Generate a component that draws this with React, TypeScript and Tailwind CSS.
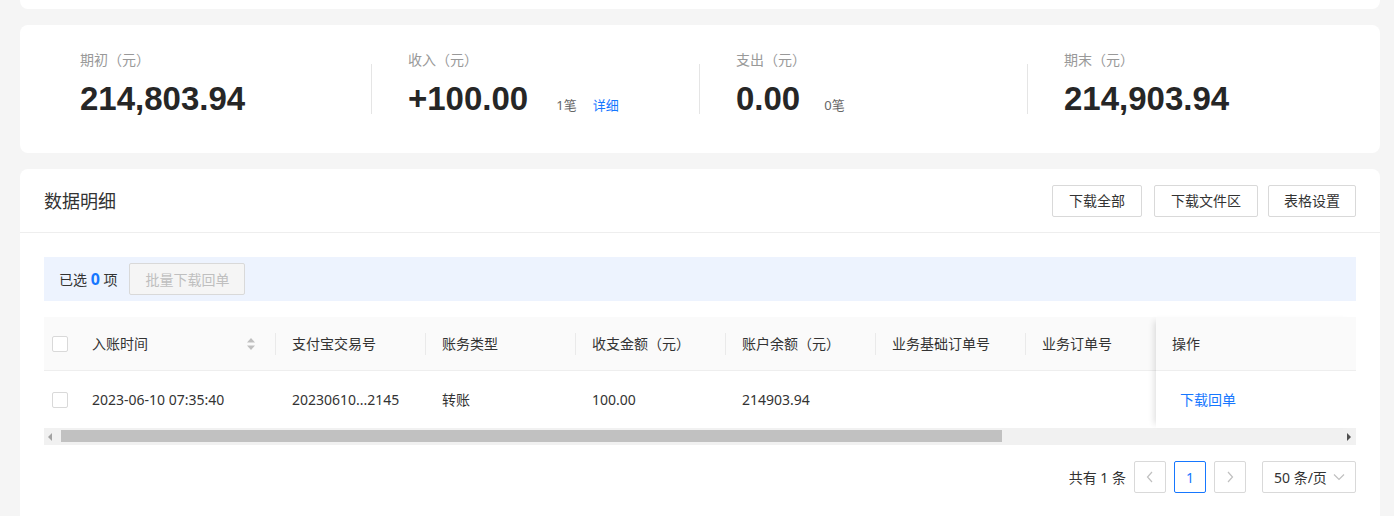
import React from "react";

const font = { fontFamily: '"Noto Sans", "Noto Sans CJK SC", sans-serif' };

function Stat({ label, value, extra, first }: { label: string; value: string; extra?: React.ReactNode; first?: boolean }) {
  return (
    <div className="w-[328px] flex items-start">
      <div className={`mt-[14px] h-[50px] w-px shrink-0 ${first ? "bg-transparent" : "bg-[#e5e5e5]"}`} />
      <div className="pl-[36px] flex flex-col">
        <div className="text-[14px] text-[#999] leading-[20px]">{label}</div>
        <div className="flex items-end mt-[11px]">
          <span className="text-[33px] font-bold text-[#262626] leading-[36px]" style={{ fontFamily: '"Liberation Sans", sans-serif' }}>{value}</span>
          {extra}
        </div>
      </div>
    </div>
  );
}

function Checkbox() {
  return <div className="w-[16px] h-[16px] border border-[#d9d9d9] rounded-[2px] bg-white" />;
}

function HeadCell({ w, children, divider = true, sort }: { w: number; children: React.ReactNode; divider?: boolean; sort?: boolean }) {
  return (
    <div className="relative flex items-center shrink-0 pl-[16px] pr-[16px] h-full" style={{ width: w }}>
      <span className="text-[14px] text-[#333] flex-1">{children}</span>
      {sort && (
        <svg width="10" height="14" viewBox="0 0 10 14" className="mr-[4px]">
          <path d="M5 1 L9 5.5 L1 5.5 Z" fill="#bfbfbf" />
          <path d="M5 13 L9 8.5 L1 8.5 Z" fill="#bfbfbf" />
        </svg>
      )}
      {divider && <div className="absolute right-0 top-1/2 -translate-y-1/2 w-px h-[22px] bg-[#eaeaea]" />}
    </div>
  );
}

function Cell({ w, children }: { w: number; children?: React.ReactNode }) {
  return (
    <div className="flex items-center shrink-0 pl-[16px] h-full text-[14px] text-[#333]" style={{ width: w }}>
      {children}
    </div>
  );
}

export default function App() {
  return (
    <div className="w-[1394px] h-[516px] bg-[#f5f5f5] overflow-hidden" style={font}>
      <div className="ml-[20px] mr-[14px] h-[9px] bg-white rounded-b-[8px]" />
      <div className="ml-[20px] mr-[14px] mt-[16px] h-[128px] bg-white rounded-[8px] flex items-start pl-[23px] pt-[25px]">
        <Stat first label="期初（元）" value="214,803.94" />
        <Stat
          label="收入（元）"
          value="+100.00"
          extra={
            <span className="ml-[28px] mb-[2px] text-[13px] text-[#666] leading-[20px]">
              1笔<span className="ml-[16px] text-[#1677ff]">详细</span>
            </span>
          }
        />
        <Stat
          label="支出（元）"
          value="0.00"
          extra={<span className="ml-[24px] mb-[2px] text-[13px] text-[#666] leading-[20px]">0笔</span>}
        />
        <Stat label="期末（元）" value="214,903.94" />
      </div>

      <div className="ml-[20px] mr-[14px] mt-[16px] bg-white rounded-t-[8px] h-[400px]">
        <div className="h-[64px] border-b border-[#eeeeee] flex items-center justify-between px-[24px]">
          <div className="text-[18px] text-[#333] mt-[2px]">数据明细</div>
          <div className="flex">
            <button className="h-[32px] w-[90px] border border-[#d9d9d9] rounded-[2px] text-[14px] text-[#333] bg-white">下载全部</button>
            <button className="ml-[12px] h-[32px] w-[104px] border border-[#d9d9d9] rounded-[2px] text-[14px] text-[#333] bg-white">下载文件区</button>
            <button className="ml-[10px] h-[32px] w-[88px] border border-[#d9d9d9] rounded-[2px] text-[14px] text-[#333] bg-white">表格设置</button>
          </div>
        </div>

        <div className="px-[24px] pt-[24px]">
          <div className="h-[44px] bg-[#edf3fe] flex items-center pl-[15px]">
            <span className="text-[14px] text-[#333]">
              已选 <span className="text-[#1677ff] font-bold text-[16px]">0</span> 项
            </span>
            <button className="ml-[12px] h-[32px] w-[116px] border border-[#d9d9d9] rounded-[2px] bg-[#f5f5f5] text-[14px] text-[#bfbfbf]">批量下载回单</button>
          </div>

          <div className="mt-[16px] relative">
            <div className="flex">
              <div className="w-[1112px] overflow-hidden">
                <div className="w-[1140px]">
                  <div className="h-[54px] bg-[#fafafa] border-b border-[#eeeeee] flex items-center">
                    <div className="w-[32px] shrink-0 flex justify-center"><Checkbox /></div>
                    <HeadCell w={200} sort>入账时间</HeadCell>
                    <HeadCell w={150}>支付宝交易号</HeadCell>
                    <HeadCell w={150}>账务类型</HeadCell>
                    <HeadCell w={150}>收支金额（元）</HeadCell>
                    <HeadCell w={150}>账户余额（元）</HeadCell>
                    <HeadCell w={150}>业务基础订单号</HeadCell>
                    <HeadCell w={150} divider={false}>业务订单号</HeadCell>
                  </div>
                  <div className="h-[57px] flex items-center">
                    <div className="w-[32px] shrink-0 flex justify-center"><Checkbox /></div>
                    <Cell w={200}>2023-06-10 07:35:40</Cell>
                    <Cell w={150}>20230610...2145</Cell>
                    <Cell w={150}>转账</Cell>
                    <Cell w={150}>100.00</Cell>
                    <Cell w={150}>214903.94</Cell>
                    <Cell w={150} />
                    <Cell w={150} />
                  </div>
                </div>
              </div>
              <div className="w-[200px] shrink-0 shadow-[-6px_0_6px_-4px_rgba(0,0,0,0.12)] relative z-10 bg-white">
                <div className="h-[54px] bg-[#fafafa] border-b border-[#eeeeee] flex items-center pl-[16px] text-[14px] text-[#333]">操作</div>
                <div className="h-[57px] flex items-center pl-[24px] text-[14px] text-[#1677ff]">下载回单</div>
              </div>
            </div>
            <div className="h-[17px] bg-[#f1f1f1] flex items-center relative">
              <svg width="6" height="8" viewBox="0 0 6 8" className="absolute left-[4px] top-[5px]">
                <path d="M4 0 L0 4 L4 8 Z" fill="#a3a3a3" />
              </svg>
              <div className="absolute left-[17px] top-[2px] w-[941px] h-[12px] bg-[#c1c1c1]" />
              <svg width="6" height="8" viewBox="0 0 6 8" className="absolute right-[5px] top-[5px]">
                <path d="M2 0 L6 4 L2 8 Z" fill="#505050" />
              </svg>
            </div>
          </div>

          <div className="mt-[16px] flex justify-end items-center">
            <span className="text-[14px] text-[#333] mr-[8px]">共有 1 条</span>
            <div className="w-[32px] h-[32px] border border-[#d9d9d9] rounded-[2px] flex items-center justify-center">
              <svg width="8" height="12" viewBox="0 0 8 12"><path d="M6 1 L1.5 6 L6 11" stroke="#c0c0c0" strokeWidth="1.2" fill="none" /></svg>
            </div>
            <div className="ml-[8px] w-[32px] h-[32px] border border-[#1677ff] rounded-[2px] flex items-center justify-center text-[14px] text-[#1677ff]">1</div>
            <div className="ml-[8px] w-[32px] h-[32px] border border-[#d9d9d9] rounded-[2px] flex items-center justify-center">
              <svg width="8" height="12" viewBox="0 0 8 12"><path d="M2 1 L6.5 6 L2 11" stroke="#c0c0c0" strokeWidth="1.2" fill="none" /></svg>
            </div>
            <div className="ml-[16px] w-[94px] h-[32px] border border-[#d9d9d9] rounded-[2px] flex items-center justify-between pl-[11px] pr-[10px]">
              <span className="text-[14px] text-[#333]">50 条/页</span>
              <svg width="12" height="8" viewBox="0 0 12 8"><path d="M1 1.5 L6 6.5 L11 1.5" stroke="#c0c0c0" strokeWidth="1.2" fill="none" /></svg>
            </div>
          </div>
        </div>
      </div>
    </div>
  );
}
